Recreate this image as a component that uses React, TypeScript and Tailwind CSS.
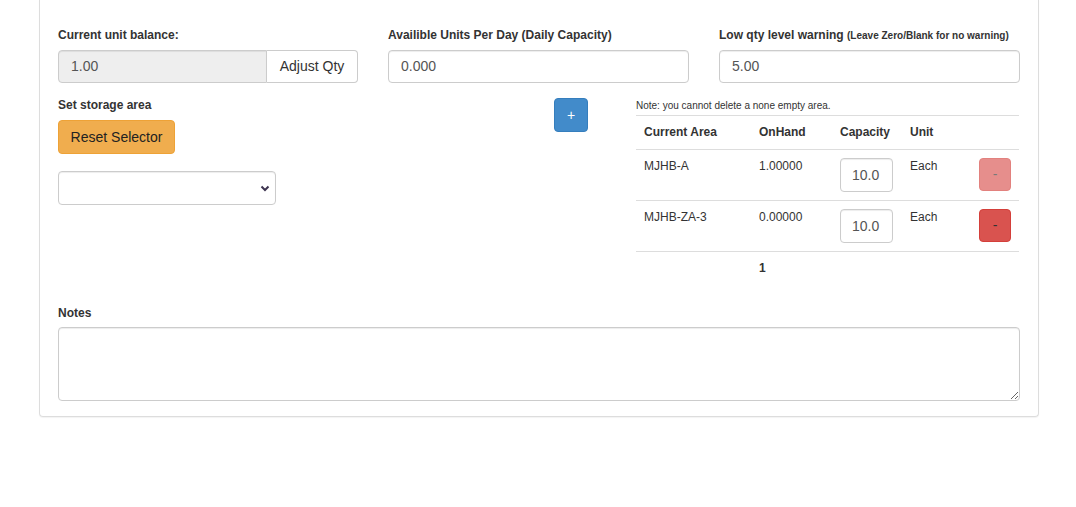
import React from "react";

const font = { fontFamily: '"Liberation Sans", Arial, Helvetica, sans-serif' };

function Row({ area, onhand, disabled }: { area: string; onhand: string; disabled?: boolean }) {
  return (
    <div className="grid grid-cols-[115px_81px_70px_69px_48px] border-t border-[#ddd] h-[51px] text-[12px] leading-[17px] text-[#333]">
      <div className="pl-2 pt-2">{area}</div>
      <div className="pl-2 pt-2">{onhand}</div>
      <div className="pl-2 pt-2">
        <input
          readOnly
          value="10.0"
          className="w-[53px] h-[34px] border border-[#ccc] rounded-[4px] px-[11px] text-[14px] text-[#555] shadow-[inset_0_1px_1px_rgba(0,0,0,0.075)] outline-none"
          style={font}
        />
      </div>
      <div className="pl-2 pt-2">Each</div>
      <div className="pl-2 pt-2">
        <button
          className={`w-[32px] h-[33px] rounded-[4px] border border-[#d43f3a] bg-[#d9534f] text-[14px] text-[#333] ${disabled ? "opacity-65" : ""}`}
          style={font}
        >
          -
        </button>
      </div>
    </div>
  );
}

export default function App() {
  return (
    <div className="w-[1076px] h-[507px] bg-white" style={font}>
      <div className="ml-[39px] w-[1000px] border-x border-b border-[#ddd] rounded-b-[4px] shadow-[0_1px_1px_rgba(0,0,0,0.05)] px-[18px] pt-[26px] pb-[15px]">
        {/* Row 1 */}
        <div className="grid grid-cols-[300px_301px_1fr] gap-x-[30px]">
          <div>
            <div className="text-[12px] font-bold leading-[18px] text-[#333] mb-[6px]">Current unit balance:</div>
            <div className="flex h-[33px]">
              <div className="w-[209px] bg-[#eee] border border-[#ccc] rounded-l-[4px] px-3 text-[14px] leading-[31px] text-[#555] shadow-[inset_0_1px_1px_rgba(0,0,0,0.075)]">
                1.00
              </div>
              <div className="flex-1 bg-white border border-l-0 border-[#ccc] rounded-r-[4px] text-center text-[14px] leading-[31px] text-[#333]">
                Adjust Qty
              </div>
            </div>
          </div>
          <div>
            <div className="text-[12px] font-bold leading-[18px] text-[#333] mb-[6px]">Availible Units Per Day (Daily Capacity)</div>
            <div className="h-[33px] border border-[#ccc] rounded-[4px] px-3 text-[14px] leading-[31px] text-[#555] shadow-[inset_0_1px_1px_rgba(0,0,0,0.075)]">
              0.000
            </div>
          </div>
          <div>
            <div className="h-[18px] text-[12px] font-bold leading-[18px] text-[#333] mb-[6px] whitespace-nowrap">
              Low qty level warning <span className="text-[10px] leading-none">(Leave Zero/Blank for no warning)</span>
            </div>
            <div className="h-[33px] border border-[#ccc] rounded-[4px] px-3 text-[14px] leading-[31px] text-[#555] shadow-[inset_0_1px_1px_rgba(0,0,0,0.075)]">
              5.00
            </div>
          </div>
        </div>

        {/* Row 2 */}
        <div className="flex mt-[13px]">
          <div className="w-[300px]">
            <div className="text-[12px] font-bold leading-[18px] text-[#333]">Set storage area</div>
            <button
              className="mt-[6px] h-[34px] w-[117px] rounded-[4px] border border-[#eea236] bg-[#f0ad4e] text-[14px] text-[#222]"
              style={font}
            >
              Reset Selector
            </button>
            <div className="relative mt-[17px] w-[218px] h-[34px] border border-[#ccc] rounded-[4px] shadow-[inset_0_1px_1px_rgba(0,0,0,0.075)]">
              <svg className="absolute right-[5px] top-[13px]" width="10" height="7" viewBox="0 0 10 7">
                <path d="M1.5 1.5 L5 5 L8.5 1.5" stroke="#3d3450" strokeWidth="2" fill="none" />
              </svg>
            </div>
          </div>
          <div className="ml-[196px] pt-[2px]">
            <button
              className="w-[34px] h-[34px] rounded-[4px] border border-[#357ebd] bg-[#428bca] text-white text-[14px]"
              style={font}
            >
              +
            </button>
          </div>
          <div className="ml-[48px] w-[383px]">
            <div className="text-[10px] leading-[19px] text-[#333] whitespace-nowrap">Note: you cannot delete a none empty area.</div>
            <div className="grid grid-cols-[115px_81px_70px_69px_48px] border-t border-[#ddd] h-[34px] text-[12px] font-bold leading-[17px] text-[#333]">
              <div className="pl-2 pt-2">Current Area</div>
              <div className="pl-2 pt-2">OnHand</div>
              <div className="pl-2 pt-2">Capacity</div>
              <div className="pl-2 pt-2">Unit</div>
              <div></div>
            </div>
            <Row area="MJHB-A" onhand="1.00000" disabled />
            <Row area="MJHB-ZA-3" onhand="0.00000" />
            <div className="grid grid-cols-[115px_81px_70px_69px_48px] border-t border-[#ddd] h-[34px] text-[12px] font-bold leading-[17px] text-[#333]">
              <div></div>
              <div className="pl-2 pt-2">1</div>
              <div></div>
              <div></div>
              <div></div>
            </div>
          </div>
        </div>

        {/* Notes */}
        <div className="mt-[19px]">
          <div className="text-[12px] font-bold leading-[18px] text-[#333] mb-[5px]">Notes</div>
          <textarea
            className="block w-full h-[74px] border border-[#ccc] rounded-[4px] shadow-[inset_0_1px_1px_rgba(0,0,0,0.075)] outline-none"
          />
        </div>
      </div>
    </div>
  );
}
